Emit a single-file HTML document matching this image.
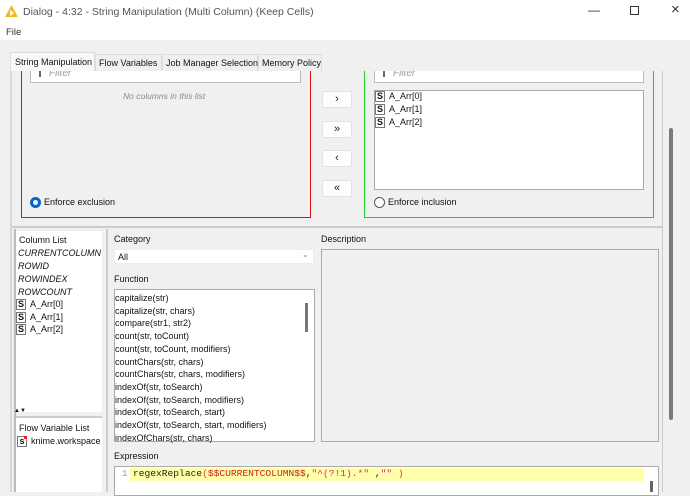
<!DOCTYPE html>
<html><head><style>
*{margin:0;padding:0;box-sizing:border-box}
body{width:690px;height:492px;overflow:hidden;background:#f0f0f0;font-family:"Liberation Sans",sans-serif;font-size:9px;color:#111;position:relative}
.a{position:absolute}
.btn{position:absolute;left:322px;width:30px;height:17px;background:#fdfdfd;border:1px solid #e2e2e2;border-radius:2px;text-align:center;font-size:11px;line-height:14px;color:#222}
.s{display:inline-block;width:10px;height:11px;border:1px solid #777;font-weight:bold;font-size:9px;line-height:9px;text-align:center;margin-right:4px;background:#fff}
.it{position:absolute;white-space:nowrap}
</style></head><body>
<div class="a" style="left:0;top:0;width:690px;height:23px;background:#fff"></div>
<svg class="a" style="left:5px;top:5px" width="13" height="12"><polygon points="6.5,0 13,12 0,12" fill="#f6b91c"/><polygon points="5,5 9,8 5,11" fill="#fff"/></svg>
<div class="a" style="left:23px;top:6px;font-size:10.5px;color:#555">Dialog - 4:32 - String Manipulation (Multi Column) (Keep Cells)</div>
<div class="a" style="left:588px;top:3px;font-size:12px;color:#333">—</div>
<div class="a" style="left:630px;top:6px;width:9px;height:9px;border:1px solid #333"></div>
<div class="a" style="left:671px;top:1px;font-size:15px;color:#333">×</div>
<div class="a" style="left:0;top:23px;width:690px;height:17px;background:#fff"></div>
<div class="a" style="left:6px;top:27px;font-size:9.5px;color:#333">File</div>
<!-- tabs -->
<div class="a" style="left:10px;top:52px;width:85px;height:19px;background:#f8f8f8;border:1px solid #ddd;border-bottom:none"></div>
<div class="a" style="left:15px;top:57px;font-size:9px">String Manipulation</div>
<div class="a" style="left:95px;top:54px;width:67px;height:17px;border:1px solid #ddd;border-bottom:none"></div>
<div class="a" style="left:99px;top:58px">Flow Variables</div>
<div class="a" style="left:162px;top:54px;width:96px;height:17px;border:1px solid #ddd;border-bottom:none"></div>
<div class="a" style="left:166px;top:58px">Job Manager Selection</div>
<div class="a" style="left:258px;top:54px;width:64px;height:17px;border:1px solid #ddd;border-bottom:none"></div>
<div class="a" style="left:262px;top:58px">Memory Policy</div>
<div class="a" style="left:10px;top:71px;width:2px;height:421px;background:#d8d8d8"></div>
<div class="a" style="left:12px;top:71px;width:650px;height:155px;overflow:hidden">
<div class="a" style="left:-12px;top:-71px;width:690px;height:300px">
<!-- red box -->
<div class="a" style="left:21px;top:60px;width:290px;height:158px;border:1px solid #d11;border-top:none"></div>
<div class="a" style="left:30px;top:67px;width:271px;height:16px;background:#fff;border:1px solid #bbb"></div>
<div class="a" style="left:39px;top:70px;width:2px;height:7px;background:#666"></div>
<div class="a" style="left:49px;top:68px;font-style:italic;color:#999;font-size:10px">Filter</div>
<div class="a" style="left:123px;top:91px;font-style:italic;color:#888;font-size:8.5px">No columns in this list</div>
<div class="a" style="left:30px;top:197px;width:11px;height:11px;border-radius:50%;background:#0a64c4"><div class="a" style="left:3px;top:3px;width:5px;height:5px;border-radius:50%;background:#fff"></div></div>
<div class="a" style="left:44px;top:197px">Enforce exclusion</div>
<!-- buttons -->
<div class="btn" style="top:91px">›</div>
<div class="btn" style="top:121px">»</div>
<div class="btn" style="top:150px">‹</div>
<div class="btn" style="top:180px">«</div>
<!-- green box -->
<div class="a" style="left:364px;top:60px;width:290px;height:158px;border:1px solid #2c2;border-top:none"></div>
<div class="a" style="left:374px;top:67px;width:270px;height:16px;background:#fff;border:1px solid #bbb"></div>
<div class="a" style="left:383px;top:70px;width:2px;height:7px;background:#666"></div>
<div class="a" style="left:393px;top:68px;font-style:italic;color:#999;font-size:10px">Filter</div>
<div class="a" style="left:374px;top:90px;width:270px;height:100px;background:#fff;border:1px solid #aaa"></div>
<div class="it" style="left:375px;top:91px"><span class="s">S</span>A_Arr[0]</div>
<div class="it" style="left:375px;top:104px"><span class="s">S</span>A_Arr[1]</div>
<div class="it" style="left:375px;top:117px"><span class="s">S</span>A_Arr[2]</div>
<div class="a" style="left:374px;top:197px;width:11px;height:11px;border-radius:50%;border:1px solid #555;background:#fff"></div>
<div class="a" style="left:388px;top:197px">Enforce inclusion</div>
</div></div>
<div class="a" style="left:662px;top:71px;width:1px;height:421px;background:#ccc"></div>
<div class="a" style="left:669px;top:128px;width:4px;height:292px;background:#7a7a7a;border-radius:2px"></div>
<div class="a" style="left:12px;top:226px;width:651px;height:2px;background:#ccc"></div>
<!-- column list -->
<div class="a" style="left:14px;top:229px;width:2px;height:263px;background:#bbb"></div>
<div class="a" style="left:16px;top:231px;width:86px;height:181px;background:#fff"></div>
<div class="a" style="left:19px;top:235px">Column List</div>
<div class="it" style="left:18px;top:248px;font-style:italic">CURRENTCOLUMN</div>
<div class="it" style="left:18px;top:261px;font-style:italic">ROWID</div>
<div class="it" style="left:18px;top:274px;font-style:italic">ROWINDEX</div>
<div class="it" style="left:18px;top:287px;font-style:italic">ROWCOUNT</div>
<div class="it" style="left:16px;top:299px"><span class="s">S</span>A_Arr[0]</div>
<div class="it" style="left:16px;top:312px"><span class="s">S</span>A_Arr[1]</div>
<div class="it" style="left:16px;top:324px"><span class="s">S</span>A_Arr[2]</div>
<div class="a" style="left:14px;top:408px;font-size:6px">▲▼</div>
<div class="a" style="left:16px;top:416px;width:86px;height:2px;background:#ccc"></div>
<div class="a" style="left:16px;top:418px;width:86px;height:74px;background:#fff"></div>
<div class="a" style="left:19px;top:423px">Flow Variable List</div>
<div class="it" style="left:17px;top:436px"><span class="s" style="position:relative">s<i style="position:absolute;right:-1px;top:-1px;width:3px;height:3px;background:#e22"></i></span>knime.workspace</div>
<div class="a" style="left:106px;top:229px;width:2px;height:263px;background:#ccc"></div>
<!-- category -->
<div class="a" style="left:114px;top:234px">Category</div>
<div class="a" style="left:114px;top:249px;width:200px;height:15px;background:#fff;border:1px solid #eee"></div>
<div class="a" style="left:118px;top:252px">All</div>
<div class="a" style="left:302px;top:250px;color:#888;font-size:8px">⌄</div>
<div class="a" style="left:114px;top:274px">Function</div>
<div class="a" style="left:114px;top:289px;width:201px;height:153px;background:#fff;border:1px solid #aaa"></div>
<div class="a" style="left:305px;top:303px;width:3px;height:29px;background:#777"></div>
<div class="a" style="left:115px;top:292px;line-height:12.7px;white-space:nowrap">capitalize(str)<br>capitalize(str, chars)<br>compare(str1, str2)<br>count(str, toCount)<br>count(str, toCount, modifiers)<br>countChars(str, chars)<br>countChars(str, chars, modifiers)<br>indexOf(str, toSearch)<br>indexOf(str, toSearch, modifiers)<br>indexOf(str, toSearch, start)<br>indexOf(str, toSearch, start, modifiers)<br>indexOfChars(str, chars)</div>
<div class="a" style="left:321px;top:234px">Description</div>
<div class="a" style="left:321px;top:249px;width:338px;height:193px;border:1px solid #aaa"></div>
<div class="a" style="left:114px;top:451px">Expression</div>
<div class="a" style="left:114px;top:466px;width:545px;height:30px;background:#fff;border:1px solid #aaa"></div>
<div class="a" style="left:130px;top:468px;width:514px;height:13px;background:#ffffaa"></div>
<div class="a" style="left:122px;top:469px;color:#999;font-family:'Liberation Mono',monospace;font-size:9px">1</div>
<div class="a" style="left:133px;top:468px;font-family:'Liberation Mono',monospace;font-size:9.6px;white-space:pre"><span style="color:#222">regexReplace</span><span style="color:#e33">(</span><span style="color:#c22">$$CURRENTCOLUMN$$</span>,<span style="color:#e0208a">"^(?!1).*"</span> ,<span style="color:#e0208a">""</span> <span style="color:#e33">)</span></div>
<div class="a" style="left:650px;top:481px;width:3px;height:11px;background:#666"></div>
</body></html>
